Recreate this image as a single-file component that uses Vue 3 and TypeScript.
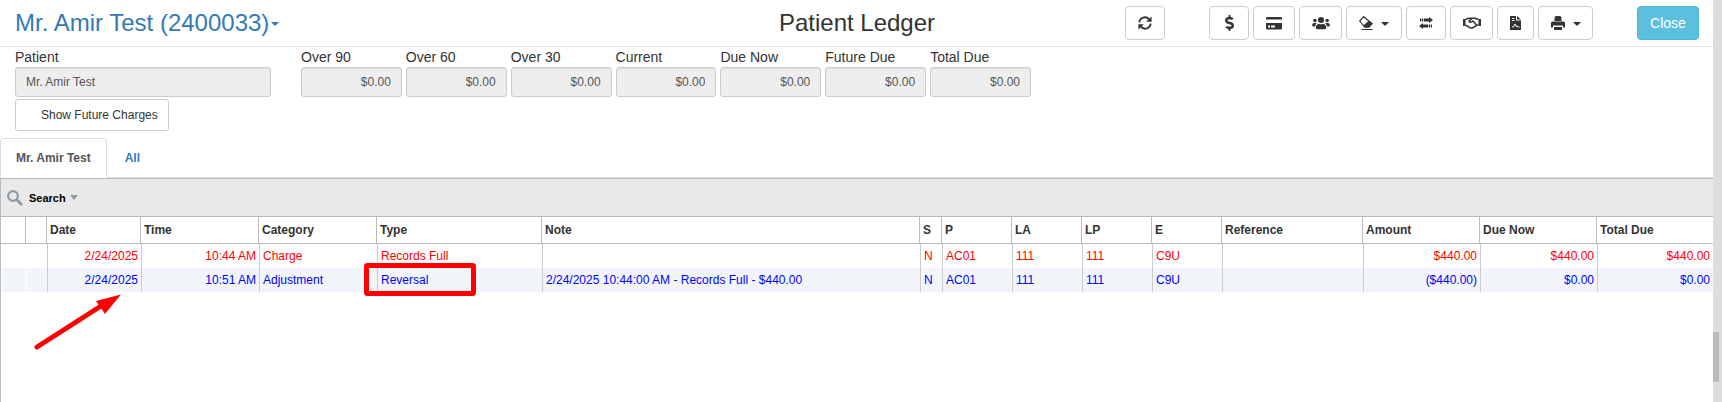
<script setup lang="ts">
import { ref } from 'vue'

interface Column {
  key: string
  label: string
  width?: number
  align?: 'right'
  plain?: boolean
}

interface Entry {
  kind: 'charge' | 'credit'
  cells: Record<string, string>
}

const balances = ['Over 90', 'Over 60', 'Over 30', 'Current', 'Due Now', 'Future Due', 'Total Due']

const columns: Column[] = [
  { key: 'select', label: '', width: 25, plain: true },
  { key: 'expand', label: '', width: 21, plain: true },
  { key: 'date', label: 'Date', width: 94, align: 'right' },
  { key: 'time', label: 'Time', width: 118, align: 'right' },
  { key: 'category', label: 'Category', width: 118 },
  { key: 'type', label: 'Type', width: 165 },
  { key: 'note', label: 'Note' },
  { key: 's', label: 'S', width: 22 },
  { key: 'p', label: 'P', width: 70 },
  { key: 'la', label: 'LA', width: 70 },
  { key: 'lp', label: 'LP', width: 70 },
  { key: 'e', label: 'E', width: 70 },
  { key: 'reference', label: 'Reference', width: 141 },
  { key: 'amount', label: 'Amount', width: 117, align: 'right' },
  { key: 'dueNow', label: 'Due Now', width: 117, align: 'right' },
  { key: 'totalDue', label: 'Total Due', width: 116, align: 'right' },
]

const shared = { date: '2/24/2025', s: 'N', p: 'AC01', la: '111', lp: '111', e: 'C9U' }

const entries: Entry[] = [
  {
    kind: 'charge',
    cells: { ...shared, time: '10:44 AM', category: 'Charge', type: 'Records Full', amount: '$440.00', dueNow: '$440.00', totalDue: '$440.00' },
  },
  {
    kind: 'credit',
    cells: {
      ...shared,
      time: '10:51 AM',
      category: 'Adjustment',
      type: 'Reversal',
      note: '2/24/2025 10:44:00 AM - Records Full - $440.00',
      amount: '($440.00)',
      dueNow: '$0.00',
      totalDue: '$0.00',
    },
  },
]

const tabs = ['Mr. Amir Test', 'All']
const activeTab = ref(tabs[0])
</script>

<template>
  <div class="page">
    <main class="content">
      <header class="topbar">
        <h2 class="patient">
          <a href="#patient">Mr. Amir Test (2400033)<span class="caret"></span></a>
        </h2>
        <h1 class="title">Patient Ledger</h1>
        <div class="actions">
          <button class="btn w40" type="button" aria-label="Refresh">
            <svg width="14" height="14" viewBox="0 0 14 14">
              <path d="M1.3 6.4A5.6 5.6 0 0 1 11.2 3.4M12.7 7.6A5.6 5.6 0 0 1 2.8 10.6" fill="none" stroke="currentColor" stroke-width="1.9" />
              <path d="M13.6.4v5.4H8.2zM.4 13.6V8.2h5.400z" />
            </svg>
          </button>
          <div class="group">
            <button class="btn w40" type="button" aria-label="Payment">
              <svg width="9" height="16" viewBox="0 0 288 512"><path d="M209.2 233.4l-108-31.6C88.7 198.2 80 186.5 80 173.5c0-16.3 13.2-29.5 29.5-29.5h66.3c12.2 0 24.2 3.7 34.2 10.5 6.1 4.1 14.3 3.1 19.5-2l34.8-34c7.1-6.9 6.1-18.4-1.8-24.500C238 74.8 207.4 64.1 176 64V16c0-8.8-7.2-16-16-16h-32c-8.8 0-16 7.2-16 16v48h-2.5C45.8 64-5.4 118.7.5 183.6c4.2 46.1 39.4 83.6 83.8 96.6l102.5 30c12.5 3.7 21.2 15.3 21.2 28.3 0 16.3-13.2 29.5-29.5 29.5h-66.3C100 368 88 364.3 78 357.5c-6.1-4.1-14.3-3.1-19.5 2l-34.8 34c-7.1 6.9-6.1 18.4 1.8 24.5 24.5 19.2 55.1 29.9 86.5 30v48c0 8.8 7.2 16 16 16h32c8.8 0 16-7.2 16-16v-48.2c46.6-.9 90.3-28.6 105.7-72.7 21.5-61.6-14.6-124.8-72.5-141.7z" /></svg>
            </button>
            <button class="btn w42" type="button" aria-label="Credit card">
              <svg width="16" height="14" viewBox="0 0 16 14"><path fill-rule="evenodd" d="M0 7h16v5.200q0 1.300-1.300 1.300H1.300Q0 13.500 0 12.200zM2 9.500v2h2v-2zM5 9.500v2h4v-2zM0 3.500V2.300Q0 1 1.300 1h13.400Q16 1 16 2.300v1.200z" /></svg>
            </button>
            <button class="btn w43" type="button" aria-label="Family">
              <svg width="18" height="14" viewBox="0 0 640 512"><circle cx="96" cy="160" r="64" /><circle cx="544" cy="160" r="64" /><circle cx="320" cy="144" r="112" /><path d="M576 256h-64c-17.6 0-33.5 7.1-45.1 18.6 40.3 22.1 68.9 62 75.1 109.4h66c17.7 0 32-14.3 32-32v-32c0-35.3-28.7-64-64-64zM396.8 288h-8.3c-20.8 10-43.9 16-68.5 16s-47.6-6-68.5-16h-8.3C179.6 288 128 339.6 128 403.2V432c0 26.5 21.5 48 48 48h288c26.5 0 48-21.5 48-48v-28.8c0-63.6-51.6-115.2-115.2-115.2zM173.1 274.6C161.5 263.1 145.6 256 128 256H64c-35.3 0-64 28.7-64 64v32c0 17.7 14.3 32 32 32h65.9c6.3-47.4 34.9-87.3 75.2-109.4z" /></svg>
            </button>
            <button class="btn w56" type="button" aria-label="Write off">
              <svg width="14" height="14" viewBox="0 0 14 14">
                <path d="M4.700.7L13 7.500 9.700 11H5.500L.7 5z" fill="none" stroke="currentColor" stroke-width="1.200" stroke-linejoin="round" />
                <path d="M9.800 4.700L13.700 7.800 10.200 11.600H5.400L4.200 9.600zM2.500 13h11v1h-11z" />
              </svg>
              <span class="caret"></span>
            </button>
            <button class="btn w40" type="button" aria-label="Transfer">
              <svg width="14" height="12" viewBox="0 0 14 12">
                <path d="M5 1.500h5V0l4 3-4 3V4.500H5zM3 1.500h1.300v3H3zM1 1.500h1.300v3H1zM9 7.500H4V6L0 9l4 3v-1.500h5zM9.700 7.500H11v3H9.700zM11.700 7.500H13v3h-1.300z" />
              </svg>
            </button>
            <button class="btn w43" type="button" aria-label="Agreement">
              <svg width="18" height="12" viewBox="0 0 18 12">
                <path d="M0 2h2.500v7H0zM15.500 2H18v7h-2.500z" />
                <path d="M2.500 2.500L5.500 1.200h6.700l3.300 1.300M2.500 8.500h1.200l3.500 2.300q1.500.6 2.300-.2 1.500.2 2-1 1.600 0 1.700-1.500h2.300M9 1.400L6 4.200q.8 1.600 2.700.6l1.300-.9 3.300 3.800" fill="none" stroke="currentColor" stroke-width="1.5" />
              </svg>
            </button>
            <button class="btn w37" type="button" aria-label="Contract">
              <svg width="11" height="14" viewBox="0 0 11 14">
                <path d="M0 0h6v4.500h5V14H0zM7 0l4 3.500H7z" />
                <path d="M2 2.500h2.500M2 4.500h2.500M2 11h1.500L5 8l1 2.500 1-.8.8 1.300h1.700" fill="none" stroke="#fff" stroke-width=".9" />
              </svg>
            </button>
            <button class="btn w55" type="button" aria-label="Print">
              <svg width="14" height="14" viewBox="0 0 14 14">
                <path d="M3.500 5V2Q3.500 0 5.500 0h3q2 0 2 2v3zM0 7q0-1.500 1.500-1.500h11Q14 5.500 14 7v4.500h-2V9.500H2v2H0zM3 11h8v3H3z" />
              </svg>
              <span class="caret"></span>
            </button>
          </div>
          <button class="btn close" type="button">Close</button>
        </div>
      </header>

      <section class="summary">
        <div class="field">
          <label for="patient-name">Patient</label>
          <input id="patient-name" type="text" value="Mr. Amir Test" readonly />
        </div>
        <div class="balances">
          <div v-for="(name, i) in balances" :key="name" class="field">
            <label :for="`balance-${i}`">{{ name }}</label>
            <input :id="`balance-${i}`" class="money" type="text" value="$0.00" readonly />
          </div>
        </div>
      </section>
      <button class="future" type="button">Show Future Charges</button>

      <nav class="tabs">
        <button
          v-for="tab in tabs"
          :key="tab"
          type="button"
          class="tab"
          :class="{ active: tab === activeTab }"
          @click="activeTab = tab"
        >{{ tab }}</button>
      </nav>

      <section class="ledger">
        <div class="toolbar">
          <button class="search" type="button">
            <svg width="16" height="16" viewBox="0 0 16 16" fill="none" stroke="#8d9aa8">
              <circle cx="6" cy="6" r="4.800" stroke-width="2.200" />
              <path d="M9.500 9.500L15 15" stroke-width="2.800" />
            </svg>
            <span>Search</span>
            <span class="drop"></span>
          </button>
        </div>
        <table>
          <colgroup>
            <col v-for="c in columns" :key="c.key" :style="c.width ? { width: `${c.width}px` } : undefined" />
          </colgroup>
          <thead>
            <tr>
              <th v-for="c in columns" :key="c.key" scope="col">{{ c.label }}</th>
            </tr>
          </thead>
          <tbody>
            <tr v-for="(entry, i) in entries" :key="i" :class="entry.kind">
              <td v-for="c in columns" :key="c.key" :class="{ right: c.align === 'right', plain: c.plain }">{{ entry.cells[c.key] }}</td>
            </tr>
          </tbody>
        </table>
        <svg class="markup" width="480" height="180" viewBox="0 0 480 180" aria-hidden="true">
          <rect x="365.500" y="86.500" width="107" height="28" rx="1" fill="none" stroke="#f00" stroke-width="5" />
          <path d="M36 168L100 127" stroke="#f00" stroke-width="5" stroke-linecap="round" />
          <path d="M120 115.500L95 122 104 135z" fill="#f00" />
        </svg>
      </section>
    </main>
    <div class="scrollbar"><div class="thumb"></div></div>
  </div>
</template>

<style>
body {
  margin: 0;
  background: #fff;
}
</style>

<style scoped>
.page {
  display: flex;
  min-height: 100vh;
  font: 12px/18px "Liberation Sans", Arial, sans-serif;
  color: #333;
}
.content {
  flex: 1;
  min-width: 0;
  display: flex;
  flex-direction: column;
}
button,
input {
  font: inherit;
  box-sizing: border-box;
  margin: 0;
}
button {
  cursor: pointer;
}
.topbar {
  display: grid;
  grid-template-columns: 1fr auto 1fr;
  align-items: center;
  height: 46px;
  padding: 0 14px 0 15px;
  border-bottom: 1px solid #e5e5e5;
}
h1,
h2 {
  margin: 0;
  font-size: 24px;
  line-height: 26px;
  font-weight: 400;
  white-space: nowrap;
}
.patient a {
  display: flex;
  align-items: center;
  gap: 2px;
  color: #337ab7;
  text-decoration: none;
}
.caret {
  margin-top: 2px;
  border: 4px solid transparent;
  border-top-color: currentColor;
  border-bottom: 0;
}
.actions {
  display: flex;
  justify-content: flex-end;
  gap: 44px;
}
.group {
  display: flex;
  gap: 4px;
}
.btn {
  display: flex;
  align-items: center;
  justify-content: center;
  gap: 8px;
  height: 34px;
  padding: 0;
  border: 1px solid #ccc;
  border-radius: 4px;
  background: #fff;
  color: #333;
}
.btn svg {
  fill: currentColor;
}
.w37 { width: 37px; }
.w40 { width: 40px; }
.w42 { width: 42px; }
.w43 { width: 43px; }
.w55 { width: 55px; }
.w56 { width: 56px; }
.close {
  width: 62px;
  border-color: #46b8da;
  background: #5bc0de;
  color: #fff;
  font-size: 14px;
}
.summary {
  display: grid;
  grid-template-columns: minmax(0, 256fr) minmax(0, 730fr) minmax(0, 637fr);
  gap: 30px;
  padding: 0 15px;
}
.balances {
  display: grid;
  grid-template-columns: repeat(7, minmax(0, 1fr));
  gap: 4px;
}
.field label {
  display: block;
  font-size: 14px;
  line-height: 20px;
}
.field input {
  display: block;
  width: 100%;
  height: 30px;
  padding: 5px 10px;
  border: 1px solid #ccc;
  border-radius: 3px;
  background: #eee;
  color: #555;
  box-shadow: inset 0 1px 1px rgba(0, 0, 0, 0.075);
}
.field .money {
  text-align: right;
}
.future {
  align-self: flex-start;
  height: 32px;
  margin: 2px 0 7px 15px;
  padding: 0 10px 0 25px;
  border: 1px solid #ccc;
  border-radius: 3px;
  background: #fff;
  color: #333;
}
.tabs {
  display: flex;
  gap: 2px;
  height: 40px;
  border-bottom: 1px solid #ddd;
  box-sizing: border-box;
}
.tab {
  height: 40px;
  padding: 0 15px;
  border: 1px solid transparent;
  border-radius: 4px 4px 0 0;
  background: transparent;
  color: #337ab7;
  font-weight: 700;
}
.tab.active {
  border-color: #ddd;
  border-bottom-color: #fff;
  background: #fff;
  color: #555;
}
.ledger {
  position: relative;
  flex: 1;
  border: solid #bbb;
  border-width: 1px 0 0 1px;
}
.toolbar {
  display: flex;
  align-items: center;
  height: 37px;
  border-bottom: 1px solid #bbb;
  background: #e9e9e9;
}
.search {
  display: flex;
  align-items: center;
  gap: 4px;
  padding: 0 6px;
  border: 0;
  background: none;
  color: #000;
  font-size: 11px;
  font-weight: 700;
}
.search svg {
  margin-right: 2px;
}
.drop {
  border: 4px solid transparent;
  border-top: 5px solid #8d9aa8;
  border-bottom: 0;
}
table {
  width: 100%;
  table-layout: fixed;
  border-collapse: separate;
  border-spacing: 0;
}
th {
  height: 26px;
  padding: 0 3px;
  border-right: 1px solid #bbb;
  border-bottom: 1px solid #bbb;
  text-align: left;
}
th:last-child {
  border-right: 0;
}
td {
  height: 24px;
  padding: 0 3px;
  border-left: 1px solid #ccc;
  white-space: nowrap;
}
td.plain {
  border-left-color: #fff;
}
.right {
  text-align: right;
}
.charge {
  color: #f00;
}
.credit {
  background: #f2f6fb;
  color: #00f;
}
.markup {
  position: absolute;
  top: 0;
  left: 0;
  pointer-events: none;
}
.scrollbar {
  display: flex;
  align-items: flex-end;
  width: 9px;
  background: #ddd;
}
.thumb {
  width: 6px;
  height: 50px;
  margin-bottom: 20px;
  background: #bbb;
}
</style>
